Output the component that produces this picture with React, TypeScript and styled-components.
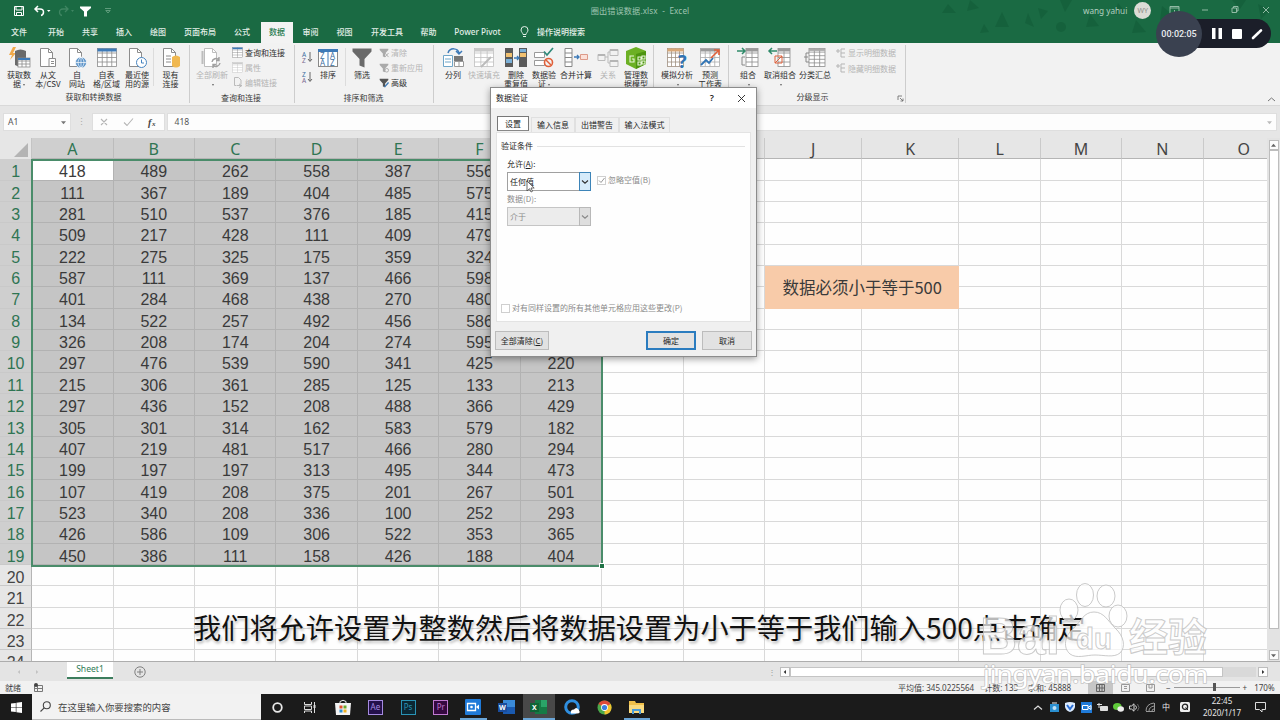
import React from "react";
import styled, { createGlobalStyle, css } from "styled-components";

const cjk = `"Noto Sans CJK SC", "Noto Sans", sans-serif`;
const ui = `"Noto Sans", "Noto Sans CJK SC", sans-serif`;
const digits = `"Liberation Sans", "Noto Sans CJK SC", sans-serif`;

const Global = createGlobalStyle`
  *, *::before, *::after { box-sizing: border-box; }
  html, body { margin: 0; padding: 0; overflow: hidden; }
  body { font-family: ${ui}; font-size: 8px; color: #333; }
  svg { display: block; flex: none; overflow: visible; }
`;

const Screen = styled.div`
  position: relative;
  width: 1280px;
  height: 720px;
  overflow: hidden;
  display: flex;
  flex-direction: column;
  background: #e6e6e6;
`;

/* ---------- title bar and tabs ---------- */
const Header = styled.header`
  position: relative;
  height: 43px;
  flex: none;
  background: #1a6a43;
  color: #e3efe8;
`;
const Pattern = styled.svg`
  position: absolute;
  right: 0;
  top: 0;
`;
const TitleRow = styled.div`
  position: relative;
  height: 22px;
  display: grid;
  grid-template-columns: 400px 480px 1fr;
  align-items: center;
`;
const QuickAccess = styled.div`
  display: flex;
  align-items: center;
  padding-left: 13px;
`;
const DocTitle = styled.div`
  text-align: center;
  font-size: 8.2px;
  color: #9fc4b0;
  padding: 0 0 2px 0;
  letter-spacing: 0.1px;
`;
const Account = styled.div`
  display: flex;
  align-items: center;
  height: 20px;
  align-self: start;
  padding-left: 203px;
  font-size: 8.2px;
  color: #b2d0c0;
`;
const Avatar = styled.span`
  width: 17px;
  height: 17px;
  margin: 0 18px 0 7px;
  border-radius: 50%;
  background: #dcdcd6;
  color: #8d8d88;
  font-size: 7px;
  line-height: 17px;
  text-align: center;
`;
const TabRow = styled.nav`
  position: relative;
  display: flex;
  height: 21px;
`;
const Tab = styled.div<{ $w: number; $active?: boolean }>`
  width: ${(p) => p.$w}px;
  text-align: center;
  white-space: nowrap;
  font: 500 8px/19px ${cjk};
  ${(p) =>
    p.$active &&
    css`
      background: #f3f3f3;
      color: #1f7a4d;
      margin-left: 3px;
    `}
`;
const LatinTab = styled(Tab)`
  font: 500 8.2px/19px ${ui};
`;
const TellMe = styled.div`
  display: flex;
  align-items: center;
  gap: 8px;
  padding: 0 0 2px 9px;
  font: 500 8px/19px ${cjk};
`;

/* ---------- ribbon ---------- */
const Ribbon = styled.section`
  display: flex;
  position: relative;
  height: 63px;
  flex: none;
  background: #f2f2f2;
  border-bottom: 1px solid #d9d9d9;
`;
const Group = styled.div<{ $w: number }>`
  position: relative;
  width: ${(p) => p.$w}px;
  display: flex;
  flex-direction: column;
  border-right: 1px solid #cdcdcd;
  margin: 2px 0 2px;
`;
const GroupBody = styled.div<{ $pad: number }>`
  display: flex;
  height: 45px;
  padding-left: ${(p) => p.$pad}px;
`;
const GroupLabel = styled.div<{ $shift?: number }>`
  font: 8px/12px ${cjk};
  text-align: center;
  color: #3a3a3a;
  padding: 2px ${(p) => p.$shift ?? 0}px 0 0;
  height: 14px;
`;
const BigButton = styled.div<{ $w: number; $off?: boolean }>`
  width: ${(p) => p.$w}px;
  flex: none;
  display: flex;
  flex-direction: column;
  align-items: center;
  padding-top: 2px;
  white-space: nowrap;
  text-align: center;
  font: 8px/9.8px ${cjk};
  color: ${(p) => (p.$off ? "#b4b4b4" : "#2e2e2e")};
  & > svg { margin-bottom: 0.5px; }
`;
const Arrow = styled.i`
  display: inline-block;
  vertical-align: middle;
  margin: 0 0 1px 2px;
  border: 1.5px solid transparent;
  border-top: 2px solid #666;
  border-bottom: 0;
`;
const InnerRule = styled.span<{ $m?: string }>`
  width: 1px;
  height: 38px;
  margin: ${(p) => p.$m ?? "3px 0 0 0"};
  background: #dcdcdc;
`;
const SmallList = styled.div<{ $ml?: number }>`
  display: flex;
  flex-direction: column;
  margin-left: ${(p) => p.$ml ?? 0}px;
`;
const SmallButton = styled.div<{ $off?: boolean }>`
  display: flex;
  align-items: center;
  gap: 2px;
  height: 15.4px;
  white-space: nowrap;
  font: 8px/15px ${cjk};
  color: ${(p) => (p.$off ? "#b4b4b4" : "#2e2e2e")};
`;
const SortColumn = styled.div`
  width: 12px;
  display: flex;
  flex-direction: column;
  gap: 8px;
  padding-top: 6px;
`;
const Launcher = styled.span`
  position: absolute;
  right: 2px;
  bottom: 2px;
`;
const Collapse = styled.span`
  margin: auto 5px 3px auto;
`;

/* ---------- formula bar ---------- */
const FormulaBar = styled.section`
  display: flex;
  align-items: center;
  height: 32px;
  flex: none;
  padding: 0 3px 0 3px;
  font-size: 8.6px;
  color: #555;
`;
const Box = styled.div<{ $w?: number }>`
  width: ${(p) => (p.$w ? p.$w + "px" : "auto")};
  flex: ${(p) => (p.$w ? "none" : "1")};
  height: 18px;
  display: flex;
  align-items: center;
  justify-content: space-between;
  background: #fdfdfd;
  border: 1px solid #dedede;
  padding: 0 4px;
`;
const Dots = styled.span`
  width: 21px;
  text-align: center;
  color: #aaa;
`;

/* ---------- sheet ---------- */
const SheetArea = styled.main`
  display: flex;
  height: 523px;
  flex: none;
`;
const Grid = styled.div`
  position: relative;
  width: 1267px;
  height: 523px;
  overflow: hidden;
  display: grid;
  grid-template-columns: 32.2px repeat(9, 81.43px) 97.2px 97.2px repeat(4, 81.43px);
  grid-template-rows: 21.2px repeat(24, 21.37px);
  background: #fefefe;
  font: 16px/21px ${digits};
  color: #3a3a3a;
`;
const HeadCell = styled.div<{ $on?: boolean }>`
  text-align: center;
  font: 16px/23px ${ui};
  color: ${(p) => (p.$on ? "#2f7553" : "#444")};
  background: ${(p) => (p.$on ? "#cfcfcf" : "#e6e6e6")};
  border-right: 1px solid ${(p) => (p.$on ? "#bcbcbc" : "#cacaca")};
  border-bottom: 1px solid #b5b5b5;
`;
const RowHead = styled(HeadCell)`
  font: 16px/25.4px ${digits};
  border-right-color: #b5b5b5;
  border-bottom-color: #c9c9c9;
`;
const Corner = styled.div`
  display: flex;
  justify-content: flex-end;
  align-items: flex-end;
  padding: 0 3px 2px 0;
  background: #e6e6e6;
  border-right: 1px solid #c4c4c4;
`;
const Cell = styled.div<{ $sel?: boolean; $active?: boolean }>`
  text-align: center;
  line-height: 25.4px;
  border-right: 1px solid ${(p) => (p.$sel ? "#b2b2b2" : "#d9d9d9")};
  border-bottom: 1px solid ${(p) => (p.$sel ? "#b2b2b2" : "#d9d9d9")};
  background: ${(p) => (p.$active ? "#fff" : p.$sel ? "#c5c5c5" : "transparent")};
`;
const Merged = styled.div`
  grid-column: 11 / span 2;
  grid-row: 7 / span 2;
  background: #f8cba9;
  text-align: center;
  font: 16.5px/43px ${cjk};
`;
const Selection = styled.div`
  position: absolute;
  left: 30.5px;
  top: 20.5px;
  width: 572px;
  height: 408px;
  border: 2px solid #4a8c6a;
  &::after {
    content: "";
    position: absolute;
    right: -3px;
    bottom: -3px;
    width: 4px;
    height: 4px;
    background: #217346;
    outline: 1px solid #fff;
  }
`;
const VScroll = styled.div`
  width: 13px;
  display: flex;
  flex-direction: column;
  align-items: center;
  padding: 2px 1px 1px;
  background: #e3e3e3;
`;
const ScrollButton = styled.span`
  width: 10px;
  height: 10px;
  flex: none;
  display: flex;
  align-items: center;
  justify-content: center;
  background: #fdfdfd;
  border: 1px solid #bdbdbd;
`;
const VThumb = styled.span`
  width: 10px;
  height: 479px;
  background: #fff;
  border: 1px solid #bdbdbd;
  margin-bottom: auto;
`;

/* ---------- sheet tabs and status ---------- */
const SheetTabs = styled.div`
  display: flex;
  height: 20px;
  flex: none;
  background: #e4e4e4;
  border-top: 1px solid #adadad;
  align-items: center;
`;
const SheetNav = styled.span`
  width: 67px;
  display: flex;
  gap: 14px;
  padding-left: 17px;
  color: #bbb;
`;
const SheetTab = styled.span`
  width: 46px;
  height: 17px;
  align-self: flex-start;
  background: #fff;
  border-bottom: 2px solid #3c7d5d;
  color: #2f7b55;
  font-size: 8.6px;
  line-height: 15px;
  text-align: center;
`;
const HScroll = styled.div`
  display: flex;
  align-items: center;
  margin-left: auto;
  width: 512px;
`;
const Grip = styled.span`
  width: 12px;
  color: #999;
`;
const HTrack = styled.span`
  flex: 1;
  height: 10px;
  background: #d9d9d9;
  margin-right: 2px;
`;
const HThumb = styled.span`
  display: block;
  width: 433px;
  height: 10px;
  background: #fff;
  border: 1px solid #c4c4c4;
`;
const Status = styled.div`
  display: flex;
  align-items: center;
  height: 13px;
  flex: none;
  padding-left: 5px;
  background: #f1f1f1;
  color: #444;
  font-size: 8px;
  white-space: nowrap;
`;
const Stats = styled.span`
  display: flex;
  gap: 10px;
  margin: 0 0 1px auto;
  width: 190px;
  font-size: 8px;
  line-height: 11px;
`;
const ViewButton = styled.span<{ $on?: boolean }>`
  width: 25px;
  height: 13px;
  display: flex;
  align-items: center;
  justify-content: center;
  background: ${(p) => (p.$on ? "#c6c6c6" : "transparent")};
`;
const Zoom = styled.span`
  display: flex;
  align-items: center;
  width: 117px;
  padding-left: 3px;
  gap: 3px;
  line-height: 11px;
`;
const ZoomTrack = styled.span`
  width: 66px;
  height: 1px;
  background: #9a9a9a;
  position: relative;
  &::after {
    content: "";
    position: absolute;
    left: 39px;
    top: -4px;
    width: 3px;
    height: 8px;
    background: #555;
  }
`;

/* ---------- taskbar ---------- */
const Taskbar = styled.footer`
  display: flex;
  height: 26px;
  flex: none;
  background: #1b1b1b;
  color: #e8e8e8;
`;
const Start = styled.div`
  width: 32px;
  display: flex;
  align-items: center;
  justify-content: center;
`;
const Search = styled.div`
  width: 229px;
  display: flex;
  align-items: center;
  gap: 7px;
  padding-left: 8px;
  background: #f2f2f2;
  border-bottom: 1px solid #bbb;
  color: #444;
  font: 9.4px/24px ${cjk};
`;
const TaskItem = styled.div<{ $on?: boolean; $line?: boolean }>`
  width: 32.7px;
  display: flex;
  align-items: center;
  justify-content: center;
  background: ${(p) => (p.$on ? "#484848" : "transparent")};
  position: relative;
  &::after {
    content: "";
    display: ${(p) => (p.$line || p.$on ? "block" : "none")};
    position: absolute;
    left: ${(p) => (p.$on ? 0 : 3)}px;
    right: ${(p) => (p.$on ? 0 : 3)}px;
    bottom: 0;
    height: 2px;
    background: #6aa5d6;
  }
`;
const Adobe = styled.span<{ $c: string; $bg: string }>`
  width: 15px;
  height: 15px;
  border: 1px solid ${(p) => p.$c};
  background: ${(p) => p.$bg};
  color: ${(p) => p.$c};
  font-size: 8px;
  line-height: 12px;
  text-align: center;
`;
const Tray = styled.div`
  margin-left: auto;
  display: flex;
  align-items: center;
  width: 250px;
`;
const TrayItem = styled.span<{ $w?: number }>`
  width: ${(p) => p.$w ?? 16}px;
  display: flex;
  justify-content: center;
  font: 8px/12px ${cjk};
`;
const Clock = styled.span`
  width: 52px;
  font-size: 8px;
  line-height: 12.5px;
  text-align: center;
`;

/* ---------- dialog ---------- */
const Dialog = styled.div`
  position: absolute;
  left: 490px;
  top: 87px;
  width: 267px;
  height: 270px;
  display: flex;
  flex-direction: column;
  background: #f0f0f0;
  border: 1px solid #8c8c8c;
  box-shadow: 0 2px 7px rgba(0, 0, 0, 0.38);
  font: 8px/12px ${cjk};
  color: #222;
`;
const DialogTitle = styled.div`
  display: flex;
  align-items: center;
  height: 20px;
  padding: 0 10px 0 5px;
  background: #fff;
`;
const HelpMark = styled.span`
  margin: 0 23px 0 auto;
  font: 600 9px/12px ${ui};
`;
const DialogTabs = styled.div`
  display: flex;
  align-items: flex-end;
  height: 24px;
  padding-left: 6px;
`;
const DialogTab = styled.span<{ $w: number; $on?: boolean }>`
  width: ${(p) => p.$w}px;
  height: 15px;
  line-height: 13px;
  text-align: center;
  border: 1px solid ${(p) => (p.$on ? "#777" : "#e0e0e0")};
  border-bottom: ${(p) => (p.$on ? "1px solid #888" : "none")};
  background: ${(p) => (p.$on ? "#fff" : "#f0f0f0")};
  margin-right: ${(p) => (p.$on ? 2 : 0)}px;
  margin-bottom: ${(p) => (p.$on ? 1 : 0)}px;
`;
const Panel = styled.div`
  display: flex;
  flex-direction: column;
  align-items: flex-start;
  width: 255px;
  height: 190px;
  margin-left: 5px;
  padding: 7px 5px 6px 4px;
  background: #fefefe;
  border: 1px solid #e3e3e3;
`;
const Legend = styled.div`
  display: flex;
  align-items: center;
  align-self: stretch;
  gap: 4px;
  &::after {
    content: "";
    flex: 1;
    height: 1px;
    background: #e2e2e2;
  }
`;
const FieldLabel = styled.div<{ $off?: boolean; $mt: number }>`
  margin: ${(p) => p.$mt}px 0 0 6px;
  color: ${(p) => (p.$off ? "#8a8a8a" : "#222")};
`;
const FieldRow = styled.div`
  display: flex;
  gap: 6px;
  margin: 2px 0 0 6px;
`;
const Select = styled.div<{ $off?: boolean }>`
  width: 84px;
  height: 19px;
  display: flex;
  align-items: center;
  justify-content: space-between;
  padding-left: 2px;
  border: 1px solid ${(p) => (p.$off ? "#c5c5c5" : "#a0a0a0")};
  background: ${(p) => (p.$off ? "#ececec" : "#fff")};
  color: ${(p) => (p.$off ? "#8a8a8a" : "#222")};
`;
const SelectArrow = styled.span<{ $off?: boolean }>`
  width: 12px;
  height: 19px;
  margin: -1px;
  display: flex;
  align-items: center;
  justify-content: center;
  border: 1px solid ${(p) => (p.$off ? "#b8b8b8" : "#3d84b8")};
  background: ${(p) => (p.$off ? "#dedede" : "#d6ebfa")};
`;
const Check = styled.div<{ $bottom?: boolean }>`
  display: flex;
  align-items: center;
  gap: 2px;
  height: ${(p) => (p.$bottom ? 14 : 16)}px;
  margin-top: ${(p) => (p.$bottom ? "auto" : 0)};
  color: #8a8a8a;
`;
const CheckBox = styled.span`
  width: 9px;
  height: 9px;
  border: 1px solid #cfcfcf;
  background: #fff;
`;
const DialogFoot = styled.div`
  display: flex;
  align-items: center;
  flex: 1;
  padding: 2px 4px 0 4px;
`;
const DialogButton = styled.span<{ $w: number; $primary?: boolean; $ml?: string }>`
  width: ${(p) => p.$w}px;
  height: 19px;
  line-height: ${(p) => (p.$primary ? 15 : 17)}px;
  margin-left: ${(p) => p.$ml ?? 0};
  text-align: center;
  background: #e2e2e2;
  border: ${(p) => (p.$primary ? "2px solid #2b7cbf" : "1px solid #bcbcbc")};
`;
const Pointer = styled.svg`
  position: absolute;
  left: 526px;
  top: 180px;
`;

/* ---------- overlays ---------- */
const Recorder = styled.div`
  position: absolute;
  left: 1156px;
  top: 11px;
  width: 115px;
  height: 46px;
  display: flex;
  align-items: center;
`;
const RecorderTime = styled.span`
  z-index: 1;
  width: 46px;
  height: 46px;
  flex: none;
  border-radius: 50%;
  background: #3a4150;
  color: #e9ebef;
  font: 500 9px/46px Roboto, sans-serif;
  text-align: center;
`;
const RecorderBar = styled.span`
  width: 90px;
  height: 29px;
  margin: -1px 0 0 -21px;
  padding-left: 31px;
  border-radius: 0 15px 15px 0;
  background: #1b1e29;
  display: flex;
  align-items: center;
  gap: 10px;
`;
const Subtitle = styled.div`
  position: absolute;
  left: 193px;
  top: 606px;
  font: 28.2px/42px ${cjk};
  color: #111;
  white-space: nowrap;
  text-shadow: 0 0 3px #fff, 1px 2px 3px rgba(0, 0, 0, 0.35);
`;
const Watermark = styled.svg`
  position: absolute;
  left: 975px;
  top: 575px;
`;

const Caret = ({ c = "#666", s = 5, d = "down" }: { c?: string; s?: number; d?: string }) => (
  <svg width={s} height={s} viewBox="0 0 6 6">
    <path
      d={d === "down" ? "M0 1.5h6L3 5z" : d === "up" ? "M0 4.5h6L3 1z" : d === "left" ? "M4.5 0v6L1 3z" : "M1.5 0v6L5 3z"}
      fill={c}
    />
  </svg>
);
const Doc = ({ c = "#8c8c8c", children }: { c?: string; children?: React.ReactNode }) => (
  <svg width="22" height="22" viewBox="0 0 22 22" fill="none" stroke={c}>
    <path d="M3.5 1.5h8l4 4v14h-12z" fill="#fff" />
    <path d="M11.5 1.5v4h4" />
    {children}
  </svg>
);
const Table = ({ x = 1.5, y = 1.5, w = 19, h = 18, n = 4, m = 4, c = "#8c8c8c", head = "#3d7ab8" }) => (
  <g stroke={c} strokeWidth=".8" fill="none">
    <rect x={x} y={y} width={w} height={h} fill="#fff" />
    {Array.from({ length: n - 1 }, (_, i) => (
      <path key={i} d={`M${x + (w * (i + 1)) / n} ${y}v${h}`} />
    ))}
    {Array.from({ length: m - 1 }, (_, i) => (
      <path key={i} d={`M${x} ${y + (h * (i + 1)) / m}h${w}`} />
    ))}
    <rect x={x} y={y} width={w} height={h / m / 1.5} fill={head} stroke="none" />
  </g>
);
const Ico = ({ children, s = 22 }: { children: React.ReactNode; s?: number }) => (
  <svg width={s} height={s} viewBox="0 0 22 22" fill="none">
    {children}
  </svg>
);
const Globe = () => (
  <g stroke="#fff" strokeWidth=".7">
    <circle cx="15" cy="15.5" r="5.5" fill="#5b93c8" />
    <path d="M9.5 15.5h11M15 10v11M15 10c-4 3-4 8 0 11c4-3 4-8 0-11" />
  </g>
);
const Cylinder = ({ x, y, w, h, c }: { x: number; y: number; w: number; h: number; c: string }) => (
  <path d={`M${x} ${y}q${w / 2}-3 ${w} 0v${h}q${-w / 2} 3 ${-w} 0z`} fill={c} />
);
const FunnelIco = ({ s = 22, c = "#6a6a6a", children }: { s?: number; c?: string; children?: React.ReactNode }) => (
  <Ico s={s}>
    <path d="M1.500 1.500h19v3l-7 7.500v8.500l-5-2V12l-7-7.500z" fill={c} />
    {children}
  </Ico>
);
const SortAZ = ({ a, b }: { a: string; b: string }) => (
  <svg width="11" height="12" viewBox="0 0 11 12">
    <text x="0" y="5.500" fontSize="6.500" fill="#3d6f9f" fontFamily="Noto Sans">{a}</text>
    <text x="0" y="11.500" fontSize="6.500" fill="#7a6a90" fontFamily="Noto Sans">{b}</text>
    <path d="M8 1v9M6 8l2 2.500L10 8" stroke="#666" fill="none" />
  </svg>
);
const SmallTable = ({ off }: { off?: boolean }) => (
  <svg width="11" height="11" viewBox="0 0 22 22">
    <Table x={1} y={1} w={20} h={20} n={2} m={4} c={off ? "#bbb" : "#777"} head={off ? "#ccc" : "#3d7ab8"} />
  </svg>
);

const cols = "ABCDEFGHIJKLMNO".split("");
const data = [
  [418, 489, 262, 558, 387, 556, ""], [111, 367, 189, 404, 485, 575, ""], [281, 510, 537, 376, 185, 415, ""],
  [509, 217, 428, 111, 409, 479, ""], [222, 275, 325, 175, 359, 324, ""], [587, 111, 369, 137, 466, 598, ""],
  [401, 284, 468, 438, 270, 480, ""], [134, 522, 257, 492, 456, 586, ""], [326, 208, 174, 204, 274, 595, ""],
  [297, 476, 539, 590, 341, 425, 220], [215, 306, 361, 285, 125, 133, 213], [297, 436, 152, 208, 488, 366, 429],
  [305, 301, 314, 162, 583, 579, 182], [407, 219, 481, 517, 466, 280, 294], [199, 197, 197, 313, 495, 344, 473],
  [107, 419, 208, 375, 201, 267, 501], [523, 340, 208, 336, 100, 252, 293], [426, 586, 109, 306, 522, 353, 365],
  [450, 386, 111, 158, 426, 188, 404],
];

const TitleBar = () => (
  <Header>
    <Pattern width="340" height="43" viewBox="0 0 340 43" fill="#0f5533" opacity=".4">
      <path d="M8 4l8 9H2zM30 0l9 8-12 3zM62 12l7 15H55zM98 8l10 3-7 8zM88 13l6 14-9-4zM120 0l12 0-7 12zM150 14l9 12-13 1zM178 3l8 10-12 2zM196 20l10 12-14 1zM222 6l11 9-13 5zM250 22l7 12-13-1zM292 0h14l-6 9zM318 4l12 6-9 9zM44 24l5 8-9 1zM310 26l10 12-14 1z" />
      <circle cx="121" cy="27" r="5" />
    </Pattern>
    <TitleRow>
      <QuickAccess>
        <svg width="12" height="12" viewBox="0 0 12 12" fill="none" stroke="#fff">
          <path d="M1.500 1.500h9v9h-9zM3 1.500v3.500h6V1.500M3.500 10.500V7.500h5v3" />
        </svg>
        <svg width="18" height="12" viewBox="0 0 18 12" fill="none" stroke="#fff" strokeWidth="1.500" style={{ marginLeft: 8 }}>
          <path d="M5 1L2 4l3 3M2 4h5c5 0 4 6 1 6.500" />
          <path d="M14 5h3.500l-1.700 2z" fill="#fff" stroke="none" />
        </svg>
        <svg width="18" height="12" viewBox="0 0 18 12" fill="none" stroke="#3f8562" strokeWidth="1.300" style={{ marginLeft: 6 }}>
          <path d="M8 1l3 3-3 3M11 4H6c-5 0-4 6-1 6.500" />
          <path d="M14 5h3l-1.500 2z" fill="#3f8562" stroke="none" />
        </svg>
        <svg width="11" height="11" viewBox="0 0 22 22" style={{ marginLeft: 5 }}>
          <path d="M0 1h22v3l-8 7v10H8V11L0 4z" fill="#fff" />
        </svg>
        <svg width="6" height="6" viewBox="0 0 6 6" fill="none" stroke="#5f9c7c" style={{ marginLeft: 14 }}>
          <path d="M0 .5h6M.8 2.500h4.400L3 5z" />
        </svg>
      </QuickAccess>
      <DocTitle>圈出错误数据.xlsx&nbsp; -&nbsp; Excel</DocTitle>
      <Account>
        wang yahui<Avatar>WY</Avatar>
        <svg width="94" height="10" viewBox="0 0 94 10" fill="none" stroke="#9fc4b0" strokeWidth=".9">
          <path d="M1 8V1.500h9V8M1 3h9M5.500 8V5M33 5h6" />
          <path d="M63 3h4.500v4.500H63zM64.500 3V1.500H69V6h-1.500M94 2l6 6M100 2l-6 6" />
        </svg>
      </Account>
    </TitleRow>
    <TabRow>
      <Tab $w={38}>文件</Tab>
      <Tab $w={36}>开始</Tab>
      <Tab $w={32}>共享</Tab>
      <Tab $w={36}>插入</Tab>
      <Tab $w={32}>绘图</Tab>
      <Tab $w={52}>页面布局</Tab>
      <Tab $w={32}>公式</Tab>
      <Tab $w={32} $active>数据</Tab>
      <Tab $w={35}>审阅</Tab>
      <Tab $w={33}>视图</Tab>
      <Tab $w={52}>开发工具</Tab>
      <Tab $w={31}>帮助</Tab>
      <LatinTab $w={67}>Power Pivot</LatinTab>
      <TellMe>
        <svg width="9" height="12" viewBox="0 0 9 12" fill="none" stroke="#e3efe8">
          <path d="M3 8.500C3 7 1 6 1 4a3.500 3.500 0 017 0c0 2-2 3-2 4.500zM3 10.500h3" />
        </svg>
        操作说明搜索
      </TellMe>
    </TabRow>
  </Header>
);

const RibbonBar = () => (
  <Ribbon>
    <Group $w={190}>
      <GroupBody $pad={4}>
        <BigButton $w={30}>
          <Ico>
            <path d="M5 0L1 8h3L2 13l6-7H5l3-6z" fill="#f0a94a" />
            <Cylinder x={7} y={4} w={11} h={14} c="#6a6a6a" />
            <Table x={10} y={11} w={12} h={9} n={3} m={3} />
          </Ico>
          获取数
          <div>据<Arrow /></div>
        </BigButton>
        <BigButton $w={28}>
          <Doc><path d="M12 11.500h6.500v8H12z" fill="#fff" /><path d="M14 14.500h3M14 16.500h3" /></Doc>
          从文<br />本/CSV
        </BigButton>
        <BigButton $w={30}><Doc><Globe /></Doc>自<br />网站</BigButton>
        <BigButton $w={29}><Ico><Table /></Ico>自表<br />格/区域</BigButton>
        <BigButton $w={32}>
          <Doc><circle cx="15.500" cy="15.500" r="5" fill="#fff" stroke="#4684c0" /><path d="M15.500 12.500v3.500h2.500" stroke="#4684c0" /></Doc>
          最近使<br />用的源
        </BigButton>
        <InnerRule />
        <BigButton $w={33}>
          <Doc><path d="M6 9h5M6 12h5M6 15h5" /><g stroke="none"><Cylinder x={12} y={10} w={8} h={9} c="#f0b850" /></g></Doc>
          现有<br />连接
        </BigButton>
      </GroupBody>
      <GroupLabel $shift={2}>获取和转换数据</GroupLabel>
    </Group>
    <Group $w={105}>
      <GroupBody $pad={5}>
        <BigButton $w={34} $off>
          <Doc c="#bdbdbd"><path d="M1.500 4v13" strokeWidth="2" /><path d="M11 15a4 4 0 017-2M19 16a4 4 0 01-7 2M18 10v3.500h-3M12 21v-3.500h3" stroke="#a0a0a0" strokeWidth="1.400" /></Doc>
          全部刷新
          <div><Arrow /></div>
        </BigButton>
        <SmallList $ml={3}>
          <SmallButton><SmallTable />查询和连接</SmallButton>
          <SmallButton $off><SmallTable off />属性</SmallButton>
          <SmallButton $off>
            <svg width="11" height="11" viewBox="0 0 11 11" fill="none" stroke="#bbb"><path d="M2.500.5h4l2.500 2.500v4M2.500.5v8h2M5 8.500h5M7 7l3 1.500-3 2" /></svg>
            编辑链接
          </SmallButton>
        </SmallList>
      </GroupBody>
      <GroupLabel $shift={2}>查询和连接</GroupLabel>
    </Group>
    <Group $w={139}>
      <GroupBody $pad={7}>
        <SortColumn><SortAZ a="A" b="Z" /><SortAZ a="Z" b="A" /></SortColumn>
        <BigButton $w={28}>
          <Ico>
            <rect x="1.500" y="2.500" width="19" height="17" fill="#fff" stroke="#888" />
            <path d="M1 2h20v3H1zM10.500 5h1v14h-1z" fill="#3d7ab8" />
            <g fontFamily="Noto Sans" fontSize="8" fill="#3d6f9f"><text x="3" y="12">Z</text><text x="3" y="19">A</text><text x="13" y="12">A</text><text x="13" y="19">Z</text></g>
          </Ico>
          排序
        </BigButton>
        <InnerRule $m="3px 1px 0 3px" />
        <BigButton $w={30}><FunnelIco />筛选</BigButton>
        <SmallList $ml={2}>
          <SmallButton $off><FunnelIco s={10} c="#aaa"><path d="M13 11l8 9M21 11l-8 9" stroke="#aaa" strokeWidth="2" /></FunnelIco>清除</SmallButton>
          <SmallButton $off><FunnelIco s={10} c="#aaa"><circle cx="17" cy="16" r="4" stroke="#aaa" strokeWidth="2" /></FunnelIco>重新应用</SmallButton>
          <SmallButton><FunnelIco s={10} c="#555"><path d="M12 20l9-10" stroke="#3d7ab8" strokeWidth="3" /></FunnelIco>高级</SmallButton>
        </SmallList>
      </GroupBody>
      <GroupLabel $shift={1}>排序和筛选</GroupLabel>
    </Group>
    <Group $w={220}>
      <GroupBody $pad={5}>
        <BigButton $w={28}>
          <Ico>
            <path d="M6 6c2-6 10-5 11 0M14 4l3 3 3-3" stroke="#3d7ab8" strokeWidth="1.500" />
            <path d="M1.500 8.500h9v11h-9zM3 12h6M3 15h6" fill="#fff" stroke="#6fa5c8" />
            <path d="M12 9h9v5h-9z" fill="#777" /><path d="M12.500 14.500h9v5h-9zM17 14v5" fill="#fff" stroke="#999" />
          </Ico>
          分列
        </BigButton>
        <BigButton $w={34} $off>
          <Ico><Table c="#c0c0c0" head="#c8c8c8" n={3} /><path d="M8 20l10-10" stroke="#bbb" strokeWidth="2" /></Ico>
          快速填充
        </BigButton>
        <BigButton $w={30}>
          <Ico>
            <path d="M0 1h8v19H0zM14 1h8v19h-8z" fill="#5a5a5a" />
            <path d="M1 6h6v4H1zM15 6h6v4h-6z" fill="#f0c070" /><path d="M1 12h6v4H1zM15 2h6v3h-6z" fill="#7ab0d8" />
            <path d="M9 11h5M12 9l2 2-2 2" stroke="#3d7ab8" strokeWidth="1.300" />
          </Ico>
          删除<br />重复值
        </BigButton>
        <BigButton $w={26}>
          <Ico>
            <path d="M1.500 5.500h10v5h-10zM1.500 13.500h10v5h-10z" fill="#fff" stroke="#999" />
            <path d="M11 4.500l3 3.500 6-7" stroke="#2f8a7a" strokeWidth="1.700" />
            <circle cx="15.500" cy="15.500" r="4" stroke="#e0603a" strokeWidth="1.600" /><path d="M13 13l5 5" stroke="#e0603a" strokeWidth="1.500" />
          </Ico>
          数据验
          <div>证<Arrow /></div>
        </BigButton>
        <BigButton $w={38}>
          <Ico>
            <path d="M0 1.500h7v18H0zM0 6h7M0 10.500h7M0 15h7" fill="#fff" stroke="#888" />
            <path d="M9 10h5M12 8l2 2-2 2" stroke="#3d7ab8" strokeWidth="1.300" />
            <path d="M15.500 7.500h7v5h-7z" fill="#fbe0d8" stroke="#dd9a88" />
          </Ico>
          合并计算
        </BigButton>
        <BigButton $w={26} $off>
          <Ico><path d="M1 7.500h7v6H1zM13 2.500h8v6h-8zM13 13.500h8v6h-8zM8 10h3V5h2M11 10v6h2" stroke="#bbb" /><path d="M13 2h8v2h-8zM13 13h8v2h-8zM1 7h7v2H1z" fill="#b5b5b5" /></Ico>
          关系
        </BigButton>
        <BigButton $w={30}>
          <Ico><path d="M1 4L11 0l10 4v13l-10 5-10-5z" fill="#6cb024" /><path d="M11 7l10-3v13l-10 5z" fill="#4d9410" /><path d="M9 9H5v6h4v-3H7M13 10h3v3h-3zM17 9h3v3h-3zM13 15h3v3h-3zM17 14h3v3h-3z" stroke="#e8f6d8" strokeWidth="1.100" /></Ico>
          管理数<br />据模型
        </BigButton>
      </GroupBody>
    </Group>
    <Group $w={75}>
      <GroupBody $pad={6}>
        <BigButton $w={34}>
          <Ico><Table w={16} c="#a09080" head="#d8a878" /><text x="12" y="21" fontSize="18" fontWeight="700" fill="#2f74b5" fontFamily="Noto Sans">?</text></Ico>
          模拟分析
          <div><Arrow /></div>
        </BigButton>
        <BigButton $w={32}>
          <Ico><Table c="#aaa" head="#999" /><path d="M2 18l5-5 3 3 4-5" stroke="#2f74b5" strokeWidth="1.800" /><path d="M12 11l8-8M15 3h5v5" stroke="#e0603a" strokeWidth="1.600" /></Ico>
          预测<br />工作表
        </BigButton>
      </GroupBody>
    </Group>
    <Group $w={177}>
      <GroupBody $pad={3}>
        <BigButton $w={32}>
          <Ico><Table x={9} w={12} n={2} head="#999" /><path d="M0 4h8M5 1l3 3-3 3" stroke="#2f8a6a" strokeWidth="1.500" /><path d="M8 10H5v8h3" stroke="#888" /></Ico>
          组合
          <div><Arrow /></div>
        </BigButton>
        <BigButton $w={32}>
          <Ico><Table x={9} w={12} n={2} head="#999" /><path d="M8 4H0M3 1L0 4l3 3" stroke="#2f8a6a" strokeWidth="1.500" /><path d="M6 9h7v7H6zM6 16l7-7" stroke="#e0603a" /></Ico>
          取消组合
          <div><Arrow /></div>
        </BigButton>
        <BigButton $w={38}>
          <Ico><Table x={5} w={16} n={3} m={5} head="#aaa" /><path d="M5 6H2v9h3M0 10h4" stroke="#888" /></Ico>
          分类汇总
        </BigButton>
        <SmallList $ml={2}>
          {["显示明细数据", "隐藏明细数据"].map((t) => (
            <SmallButton key={t} $off>
              <svg width="10" height="10" viewBox="0 0 10 10" fill="none" stroke="#b5b5b5"><path d="M0 3h4M2 1v4M9 1H5v8h4M5 5h4" /></svg>
              {t}
            </SmallButton>
          ))}
        </SmallList>
      </GroupBody>
      <GroupLabel $shift={9}>分级显示</GroupLabel>
      <Launcher>
        <svg width="5" height="5" viewBox="0 0 5 5" fill="none" stroke="#666" strokeWidth=".8"><path d="M0 4V0h4M2 2l3 3M5 2.500V5H2.500" /></svg>
      </Launcher>
    </Group>
    <Collapse>
      <svg width="7" height="5" viewBox="0 0 7 5" fill="none" stroke="#777"><path d="M0 4l3.500-3L7 4" /></svg>
    </Collapse>
  </Ribbon>
);

const Sheet = () => (
  <SheetArea>
    <Grid>
      <Corner>
        <svg width="14" height="14" viewBox="0 0 14 14"><path d="M14 0v14H0z" fill="#b4b4b4" /></svg>
      </Corner>
      {cols.map((c, i) => (
        <HeadCell key={c} $on={i < 7}>{c}</HeadCell>
      ))}
      {Array.from({ length: 24 }, (_, r) => (
        <React.Fragment key={r}>
          <RowHead $on={r < 19}>{r + 1}</RowHead>
          {cols.map((c, i) => {
            if ((r === 5 || r === 6) && (i === 9 || i === 10)) {
              return r === 5 && i === 9 ? <Merged key={c}>数据必须小于等于500</Merged> : null;
            }
            return (
              <Cell key={c} $sel={r < 19 && i < 7} $active={r === 0 && i === 0}>
                {data[r]?.[i]}
              </Cell>
            );
          })}
        </React.Fragment>
      ))}
      <Selection />
    </Grid>
    <VScroll>
      <ScrollButton><Caret d="up" /></ScrollButton>
      <VThumb />
      <ScrollButton><Caret /></ScrollButton>
    </VScroll>
  </SheetArea>
);

const TaskbarRow = () => (
  <Taskbar>
    <Start>
      <svg width="11" height="11" viewBox="0 0 11 11" fill="#fff"><path d="M0 1.500L4.800.9v4.300H0zM5.400.8L11 0v5.200H5.400zM0 5.800h4.800v4.300L0 9.500zM5.400 5.800H11V11l-5.600-.8z" /></svg>
    </Start>
    <Search>
      <svg width="11" height="11" viewBox="0 0 11 11" fill="none" stroke="#444" strokeWidth="1.100"><circle cx="6.800" cy="4.200" r="3.500" /><path d="M4.200 6.800L.5 10.500" /></svg>
      在这里输入你要搜索的内容
    </Search>
    <TaskItem><svg width="11" height="11" viewBox="0 0 11 11"><circle cx="5.500" cy="5.500" r="4.300" fill="none" stroke="#e8e8e8" strokeWidth="1.800" /></svg></TaskItem>
    <TaskItem><svg width="12" height="11" viewBox="0 0 12 11" fill="none" stroke="#ddd"><path d="M.5 0v2.500h7V0M.5 4h7v3.500h-7zM.5 11V9h7v2M10.500 0v11" /><path d="M9.500 3h2v3h-2z" fill="#ddd" stroke="none" /></svg></TaskItem>
    <TaskItem>
      <svg width="16" height="16" viewBox="0 0 16 16"><path d="M5 4V2.500Q8 0 11 2.500V4" fill="none" stroke="#eee" /><path d="M0 4h16l-1 12H1z" fill="#f4f4f4" /><path d="M4.500 6.500h3v3h-3z" fill="#e04e2a" /><path d="M8.500 6.500h3v3h-3z" fill="#6aa82a" /><path d="M4.500 10.500h3v3h-3z" fill="#2b8fd0" /><path d="M8.500 10.500h3v3h-3z" fill="#f0b020" /></svg>
    </TaskItem>
    <TaskItem><Adobe $c="#a58ae0" $bg="#23104a">Ae</Adobe></TaskItem>
    <TaskItem><Adobe $c="#2a93b5" $bg="#0b2733">Ps</Adobe></TaskItem>
    <TaskItem><Adobe $c="#c07ad0" $bg="#35093f">Pr</Adobe></TaskItem>
    <TaskItem $line>
      <svg width="16" height="16" viewBox="0 0 16 16"><rect width="16" height="16" rx="1" fill="#1f7ad8" /><path d="M2.500 4.500h8v7h-8z" fill="none" stroke="#fff" strokeWidth="1.300" /><path d="M11 8l3-2.500v5z" fill="#fff" /><circle cx="6.500" cy="8" r="1.300" fill="#fff" /></svg>
    </TaskItem>
    <TaskItem>
      <svg width="17" height="14" viewBox="0 0 17 14"><path d="M5 0h12v14H5z" fill="#3a8ad8" /><path d="M5 7h12v7H5z" fill="#1a5ab0" /><path d="M0 3h9v9H0z" fill="#1a4c9c" /><text x="1" y="10" fontSize="7" fontWeight="700" fill="#fff" fontFamily="Noto Sans">W</text></svg>
    </TaskItem>
    <TaskItem $on>
      <svg width="17" height="14" viewBox="0 0 17 14"><path d="M5 0h12v14H5z" fill="#2aa468" /><path d="M5 7h12v7H5zM5 0h6v7H5z" fill="#167a45" /><path d="M0 3h9v9H0z" fill="#0f6436" /><text x="2" y="10" fontSize="7" fontWeight="700" fill="#fff" fontFamily="Noto Sans">X</text></svg>
    </TaskItem>
    <TaskItem>
      <svg width="16" height="16" viewBox="0 0 16 16"><circle cx="8" cy="8" r="6.300" fill="none" stroke="#2f8fe0" strokeWidth="3" /><path d="M7 14.500q-1-4 3-4q2-3 4.500 0q3 4-1.500 4z" fill="#fff" /></svg>
    </TaskItem>
    <TaskItem>
      <svg width="15" height="15" viewBox="0 0 15 15"><circle cx="7.500" cy="7.500" r="7" fill="#4aa84a" /><path d="M7.500 7.500L1.400 4A7 7 0 0113.600 4z" fill="#dd4a38" /><path d="M7.500 7.500L13.600 4a7 7 0 01-6 10.500z" fill="#f3c32f" /><circle cx="7.500" cy="7.500" r="3.400" fill="#fff" /><circle cx="7.500" cy="7.500" r="2.600" fill="#3c7ee0" /></svg>
    </TaskItem>
    <TaskItem $line>
      <svg width="15" height="13" viewBox="0 0 15 13"><path d="M0 0h6l1 2h8v10H0z" fill="#f0c04a" /><path d="M0 4h15v8H0z" fill="#fadb80" /><path d="M3 8h9v5h-2v-3H5v3H3z" fill="#4c9cd8" /></svg>
    </TaskItem>
    <Tray>
      <TrayItem><svg width="8" height="5" viewBox="0 0 8 5" fill="none" stroke="#ddd" strokeWidth="1.200"><path d="M0 4.500L4 1l4 3.500" /></svg></TrayItem>
      <TrayItem><svg width="9" height="10" viewBox="0 0 9 10"><path d="M2 0h5v2H2z" fill="#888" /><path d="M0 2h9v8H0z" fill="#2a8fd0" /><circle cx="4.500" cy="6" r="2" fill="#bfe0f5" /></svg></TrayItem>
      <TrayItem><svg width="10" height="10" viewBox="0 0 10 10"><path d="M0 1q5-2 10 0v4q-1 4-5 5q-4-1-5-5z" fill="#dcecff" /><path d="M2 3l3 4 3-4" stroke="#2b70d8" strokeWidth="2" fill="none" /></svg></TrayItem>
      <TrayItem><svg width="11" height="11" viewBox="0 0 11 11"><path d="M0 0h11v11H0z" fill="#1f7ad8" /><path d="M1.500 3.500h5.500v4H1.500zM7 5.500l3-2v4z" stroke="#fff" fill="none" /></svg></TrayItem>
      <TrayItem><svg width="11" height="9" viewBox="0 0 11 9" fill="none" stroke="#ddd"><path d="M3.500 3.500h7v4h-7z" fill="#ddd" /><path d="M0 1.500h5M2 0v5" /></svg></TrayItem>
      <TrayItem><svg width="11" height="9" viewBox="0 0 11 9"><ellipse cx="4.300" cy="3.500" rx="4.300" ry="3.500" fill="#5fc93a" /><ellipse cx="7.700" cy="6" rx="3.300" ry="2.800" fill="#eee" /></svg></TrayItem>
      <TrayItem><svg width="11" height="9" viewBox="0 0 11 9" fill="none" stroke="#ddd"><path d="M.5 3h2L5 .8v7.400L2.500 6h-2zM6.500 2.500q2 2 0 4" /><path d="M8.500 1q3 3.500 0 7" stroke="#666" /></svg></TrayItem>
      <TrayItem><svg width="10" height="10" viewBox="0 0 10 10" fill="none" stroke="#999"><path d="M9.500 1v8.500H1M9 1Q1 2 1 9M9 4Q4 5 4 9M9 7q-2 0-2 2" /></svg></TrayItem>
      <TrayItem>中</TrayItem>
      <TrayItem $w={22}><svg width="10" height="10" viewBox="0 0 10 10"><rect width="10" height="10" rx="1.500" fill="#eee" /><circle cx="5" cy="4.800" r="2.600" fill="none" stroke="#222" strokeWidth="1.300" /><path d="M5.500 5.500l2.500 2.500" stroke="#222" /></svg></TrayItem>
      <Clock>22:45<br />2020/1/17</Clock>
      <TrayItem $w={25}><svg width="11" height="11" viewBox="0 0 11 11" fill="none" stroke="#ddd"><path d="M.5.5h10v7H7v2.500L4.500 7.500h-4z" /></svg></TrayItem>
    </Tray>
  </Taskbar>
);

const SelectChevron = ({ c }: { c: string }) => (
  <svg width="6" height="4" viewBox="0 0 6 4" fill="none" stroke={c} strokeWidth="1.100"><path d="M0 .5l3 2.700L6 .5" /></svg>
);

const ValidationDialog = () => (
  <Dialog>
    <DialogTitle>
      数据验证
      <HelpMark>?</HelpMark>
      <svg width="9" height="9" viewBox="0 0 9 9" stroke="#222" strokeWidth=".9"><path d="M1 1l7 7M8 1L1 8" /></svg>
    </DialogTitle>
    <DialogTabs>
      <DialogTab $w={32} $on>设置</DialogTab>
      <DialogTab $w={44}>输入信息</DialogTab>
      <DialogTab $w={44}>出错警告</DialogTab>
      <DialogTab $w={51}>输入法模式</DialogTab>
    </DialogTabs>
    <Panel>
      <Legend>验证条件</Legend>
      <FieldLabel $mt={6}>允许(<u>A</u>):</FieldLabel>
      <FieldRow>
        <Select>任何值<SelectArrow><SelectChevron c="#333" /></SelectArrow></Select>
        <Check>
          <CheckBox><svg width="7" height="7" viewBox="0 0 7 7" fill="none" stroke="#999"><path d="M1 3.500l2 2 3.500-4.500" /></svg></CheckBox>
          忽略空值(B)
        </Check>
      </FieldRow>
      <FieldLabel $off $mt={2}>数据(D):</FieldLabel>
      <FieldRow>
        <Select $off>介于<SelectArrow $off><SelectChevron c="#888" /></SelectArrow></Select>
      </FieldRow>
      <Check $bottom><CheckBox />对有同样设置的所有其他单元格应用这些更改(P)</Check>
    </Panel>
    <DialogFoot>
      <DialogButton $w={54}>全部清除(<u>C</u>)</DialogButton>
      <DialogButton $w={50} $primary $ml="auto">确定</DialogButton>
      <DialogButton $w={50} $ml="6px">取消</DialogButton>
    </DialogFoot>
  </Dialog>
);

export default function App() {
  return (
    <Screen>
      <Global />
      <TitleBar />
      <RibbonBar />
      <FormulaBar>
        <Box $w={68}>A1<Caret c="#777" /></Box>
        <Dots>⋮</Dots>
        <Box $w={73}>
          <svg width="62" height="10" viewBox="0 0 62 10" fill="none" stroke="#b5b5b5" strokeWidth="1.100">
            <path d="M4 2l6 6M10 2L4 8M27 5.500l3 3 6-7" />
            <text x="51" y="8.500" fontSize="10" fontStyle="italic" fontWeight="700" fill="#444" stroke="none" fontFamily="Liberation Serif">f</text>
            <text x="55" y="9" fontSize="7" fontStyle="italic" fontWeight="700" fill="#444" stroke="none" fontFamily="Liberation Serif">x</text>
          </svg>
        </Box>
        <span>&nbsp;</span>
        <Box><span>&nbsp;418</span><Caret c="#bbb" /></Box>
      </FormulaBar>
      <Sheet />
      <SheetTabs>
        <SheetNav><Caret s={4} d="left" c="#c2c2c2" /><Caret s={4} d="right" c="#c2c2c2" /></SheetNav>
        <SheetTab>Sheet1</SheetTab>
        <svg width="12" height="12" viewBox="0 0 12 12" fill="none" stroke="#808080" style={{ marginLeft: 21 }}><circle cx="6" cy="6" r="5.200" /><path d="M3 6h6M6 3v6" /></svg>
        <HScroll>
          <Grip>⋮</Grip>
          <ScrollButton><Caret s={4} d="left" c="#333" /></ScrollButton>
          <HTrack><HThumb /></HTrack>
          <ScrollButton style={{ marginRight: 12 }}><Caret s={4} d="right" c="#333" /></ScrollButton>
        </HScroll>
      </SheetTabs>
      <Status>
        就绪
        <svg width="9" height="9" viewBox="0 0 9 9" style={{ marginLeft: 13 }}><path d="M.5 2.500h8v6h-8zM.5 5.500h8M3.500 2.500v6" fill="none" stroke="#777" /><circle cx="2" cy="2" r="2" fill="#444" /></svg>
        <Stats><span>平均值: 345.0225564</span><span>计数: 133</span><span>求和: 45888</span></Stats>
        <ViewButton $on><svg width="9" height="8" viewBox="0 0 9 8" fill="none" stroke="#666"><path d="M.5.5h8v7h-8zM.5 4h8M3.500 0v8M6 0v8" /></svg></ViewButton>
        <ViewButton><svg width="9" height="8" viewBox="0 0 9 8" fill="none" stroke="#999"><path d="M.5.5h8v7h-8zM3 2.500h3M3 4.500h3" /></svg></ViewButton>
        <ViewButton><svg width="9" height="8" viewBox="0 0 9 8" fill="none" stroke="#999"><path d="M.5.5h8v7h-8zM3 0v4h3V0" /></svg></ViewButton>
        <Zoom>−<ZoomTrack />+<span style={{ marginLeft: 4 }}>170%</span></Zoom>
      </Status>
      <TaskbarRow />
      <ValidationDialog />
      <Pointer width="9" height="13" viewBox="0 0 9 13"><path d="M1 1v10l2.500-2.300 1.500 3.300 1.500-.7L5 8h3.200z" fill="#fff" stroke="#444" strokeWidth=".8" /></Pointer>
      <Recorder>
        <RecorderTime>00:02:05</RecorderTime>
        <RecorderBar>
          <svg width="10" height="11" viewBox="0 0 10 11" fill="#fff"><path d="M0 0h3.500v11H0zM6.500 0H10v11H6.500z" /></svg>
          <svg width="10" height="10" viewBox="0 0 10 10"><rect width="10" height="10" rx="1" fill="#fff" /></svg>
          <svg width="10" height="10" viewBox="0 0 10 10" stroke="#fff" strokeWidth="2.600"><path d="M1 9L7 3.300M7.800 2.500l1.200-1.200" strokeLinecap="round" /></svg>
        </RecorderBar>
      </Recorder>
      <Subtitle>我们将允许设置为整数然后将数据设置为小于等于我们输入500点击确定</Subtitle>
      <Watermark width="240" height="120" viewBox="0 0 240 120" fill="#fff" fillOpacity=".7" stroke="#bdbdbd" strokeOpacity=".8" strokeWidth="1">
        <text x="5" y="79" fontSize="51" fontWeight="700" fontFamily="Liberation Sans" textLength="80" lengthAdjust="spacingAndGlyphs">Bai</text>
        <ellipse cx="94" cy="35" rx="9" ry="11" />
        <ellipse cx="110" cy="20" rx="8.500" ry="11.500" />
        <ellipse cx="131" cy="21" rx="9" ry="11" />
        <ellipse cx="143" cy="41" rx="9" ry="11" />
        <path d="M119 37c-10 0-13 9-20 16c-10 8-11 20-4 26c7 5 16 1 25 1c9 0 19 3 25-2c6-6 4-17-5-25c-7-7-11-16-21-16z" />
        <text x="101" y="74" fontSize="30" fontWeight="700" fontFamily="Liberation Sans" textLength="36" lengthAdjust="spacingAndGlyphs">du</text>
        <text x="154" y="76" fontSize="39" fontWeight="700" fontFamily="Noto Sans CJK SC">经验</text>
        <text x="8" y="108" fontSize="24" fontFamily="Noto Sans" fill="#fff" fillOpacity="1" stroke="#bbb" strokeWidth="1.600" paintOrder="stroke" textLength="225" lengthAdjust="spacingAndGlyphs">jingyan.baidu.com</text>
      </Watermark>
    </Screen>
  );
}
